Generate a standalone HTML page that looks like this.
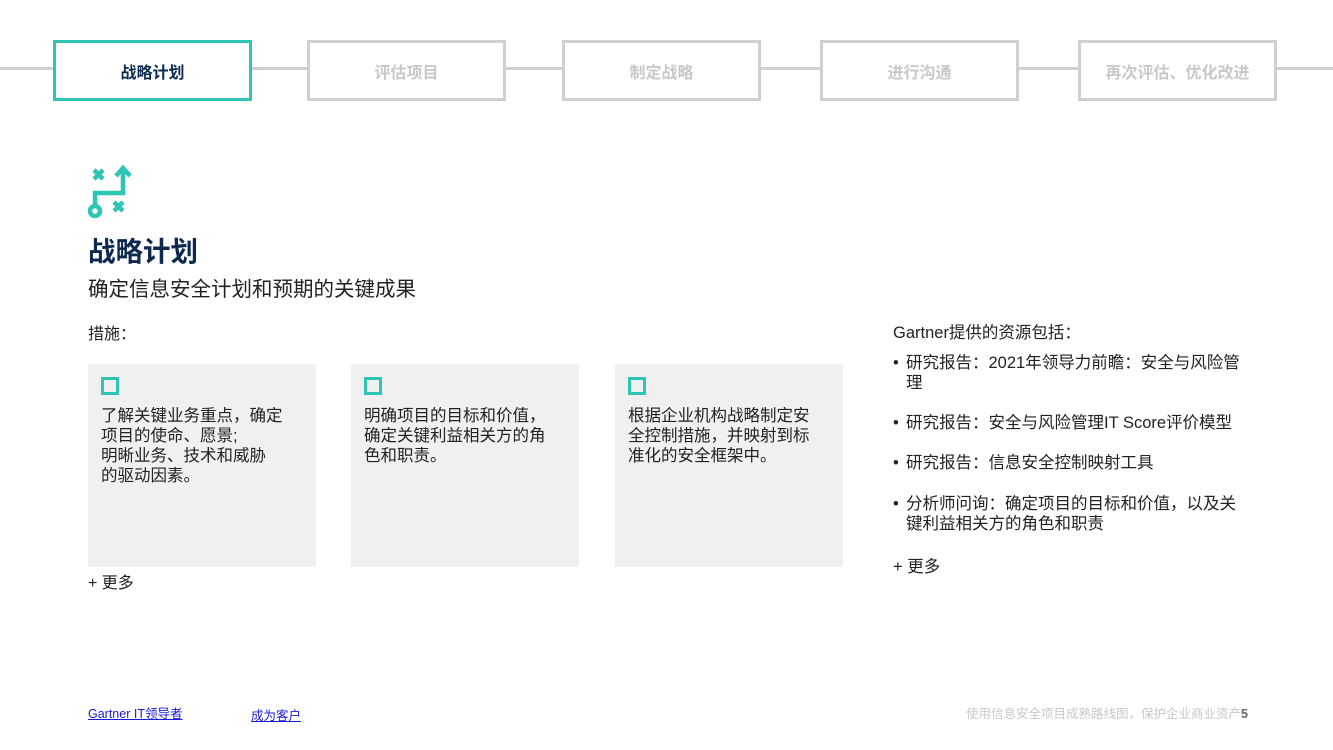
<!DOCTYPE html>
<html><head><meta charset="utf-8"><style>
*{margin:0;padding:0;box-sizing:border-box}
body{width:1333px;height:750px;background:#fff;position:relative;overflow:hidden;font-family:"Liberation Sans","WenQuanYi Zen Hei","Noto Sans CJK SC",sans-serif;color:#222}
.line{position:absolute;left:0;right:0;top:67px;height:3px;background:#d0d0d0}
.tab{position:absolute;top:40px;width:199px;height:61px;border:3px solid #d0d0d0;background:#fff;font-size:16px;font-weight:bold;color:#c8c8c8;display:flex;align-items:center;justify-content:center;font-family:"Liberation Sans","Noto Sans CJK SC",sans-serif}
.tab.on{border-color:#2ec5b5;color:#0c2a4f}
.abs{position:absolute;white-space:nowrap}
.card{position:absolute;top:364px;width:228px;height:203px;background:#f0f0f0}
.card .cb{position:absolute;left:13px;top:13px;width:18px;height:18px;border:3px solid #2ec5b5}
.card .t{position:absolute;left:13px;top:42px;font-size:16.5px;line-height:20px;color:#222;white-space:nowrap}
.li{position:absolute;left:893px;font-size:16.5px;line-height:20px;white-space:nowrap}
.li span{position:absolute;left:0}
.li div{padding-left:13px}
a{color:#1a1ad8;text-decoration:underline}
</style></head><body>
<div class="line"></div>
<div class="tab on" style="left:53px">战略计划</div>
<div class="tab" style="left:307px">评估项目</div>
<div class="tab" style="left:562px">制定战略</div>
<div class="tab" style="left:820px">进行沟通</div>
<div class="tab" style="left:1078px">再次评估、优化改进</div>

<svg class="abs" style="left:84px;top:162px" width="52" height="58" viewBox="84 162 52 58" fill="none" stroke="#2ec5b5" stroke-width="4.5">
<path d="M94 170l9 9M103 170l-9 9"/>
<path d="M114 202l9 9M123 202l-9 9"/>
<path d="M95 205V193h28V168"/>
<path d="M116 176l7-8 7 8"/>
<circle cx="95" cy="211" r="5"/>
</svg>

<div class="abs" style="left:88px;top:229px;font-size:27.5px;font-weight:bold;color:#0c2a4f;font-family:'Liberation Sans','Noto Sans CJK SC',sans-serif">战略计划</div>
<div class="abs" style="left:88px;top:272px;font-size:20.5px;color:#222">确定信息安全计划和预期的关键成果</div>
<div class="abs" style="left:88px;top:320px;font-size:16px">措施：</div>

<div class="card" style="left:88px"><div class="cb"></div><div class="t">了解关键业务重点，确定<br>项目的使命、愿景;<br>明晰业务、技术和威胁<br>的驱动因素。</div></div>
<div class="card" style="left:351px"><div class="cb"></div><div class="t">明确项目的目标和价值，<br>确定关键利益相关方的角<br>色和职责。</div></div>
<div class="card" style="left:615px"><div class="cb"></div><div class="t">根据企业机构战略制定安<br>全控制措施，并映射到标<br>准化的安全框架中。</div></div>
<div class="abs" style="left:88px;top:569px;font-size:16px">+ 更多</div>

<div class="abs" style="left:893px;top:319px;font-size:16.5px">Gartner提供的资源包括：</div>
<div class="li" style="top:353px"><span>•</span><div>研究报告：2021年领导力前瞻：安全与风险管<br>理</div></div>
<div class="li" style="top:413px"><span>•</span><div>研究报告：安全与风险管理IT Score评价模型</div></div>
<div class="li" style="top:453px"><span>•</span><div>研究报告：信息安全控制映射工具</div></div>
<div class="li" style="top:494px"><span>•</span><div>分析师问询：确定项目的目标和价值，以及关<br>键利益相关方的角色和职责</div></div>
<div class="abs" style="left:893px;top:553px;font-size:16.5px">+ 更多</div>

<a class="abs" style="left:88px;top:703px;font-size:12.5px">Gartner IT领导者</a>
<a class="abs" style="left:251px;top:705px;font-size:12.5px">成为客户</a>
<div class="abs" style="left:966px;top:703px;font-size:12.5px;color:#c8c8c8">使用信息安全项目成熟路线图，保护企业商业资产<b style="color:#666">5</b></div>
</body></html>
